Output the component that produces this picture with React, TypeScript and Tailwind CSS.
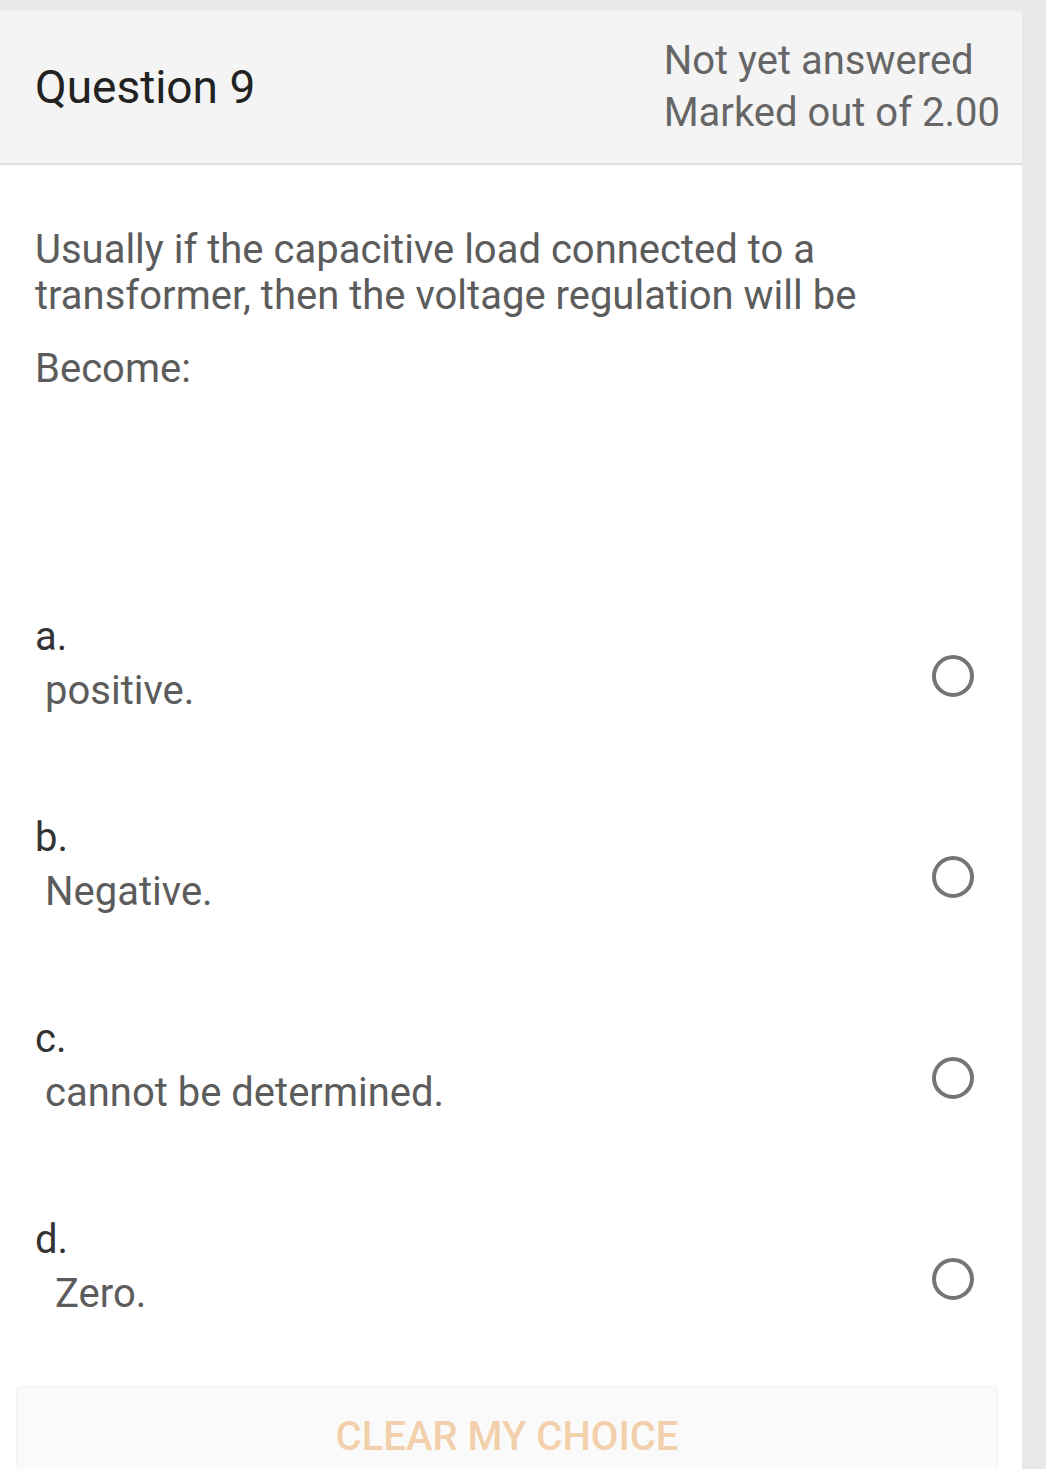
export default function App() {
  const options = [
    { letter: "a.", text: "positive.", pad: "pl-[10px]" },
    { letter: "b.", text: "Negative.", pad: "pl-[10px]" },
    { letter: "c.", text: "cannot be determined.", pad: "pl-[10px]" },
    { letter: "d.", text: "Zero.", pad: "pl-[20px]" },
  ];
  return (
    <div
      className="w-[1046px] h-[1469px] overflow-hidden bg-[#e9e9e9] pt-[11px] pr-[24px]"
      style={{ fontFamily: "Roboto, 'Liberation Sans', sans-serif" }}
    >
      <div className="h-full bg-white rounded-tr-[4px] overflow-hidden">
        <div className="h-[154px] bg-[#f4f4f4] border-b-2 border-[#dedede] flex items-center justify-between pl-[35px] pr-[22px]">
          <div className="text-[46px] text-[#222] leading-none">Question 9</div>
          <div className="text-[40px] text-[#666] leading-[52px]">
            <div>Not yet answered</div>
            <div>Marked out of 2.00</div>
          </div>
        </div>
        <div className="px-[35px] pt-[62px] text-[40px] text-[#5c5c5c] leading-[46px]">
          <p>Usually if the capacitive load connected to a transformer, then the voltage regulation will be</p>
          <p className="mt-[27px]">Become:</p>
        </div>
        <div className="mt-[218px] flex flex-col gap-[93px]">
          {options.map((o) => (
            <div key={o.letter} className="flex items-start pl-[35px] pr-[48px]">
              <div className="flex-1">
                <div className="text-[40px] text-[#333] leading-[54px]">{o.letter}</div>
                <div className={`text-[40px] text-[#5c5c5c] leading-[54px] ${o.pad}`}>{o.text}</div>
              </div>
              <div className="mt-[45px] w-[42px] h-[42px] rounded-full border-[4px] border-[#757575]" />
            </div>
          ))}
        </div>
        <div className="ml-[18px] mr-[26px] mt-[67px] h-[120px] bg-[#fafafa] shadow-[0_0_4px_rgba(0,0,0,0.12)] flex justify-center pt-[29px]">
          <span className="text-[40px] text-[#f3d0ac] font-medium leading-none">CLEAR MY CHOICE</span>
        </div>
      </div>
    </div>
  );
}
